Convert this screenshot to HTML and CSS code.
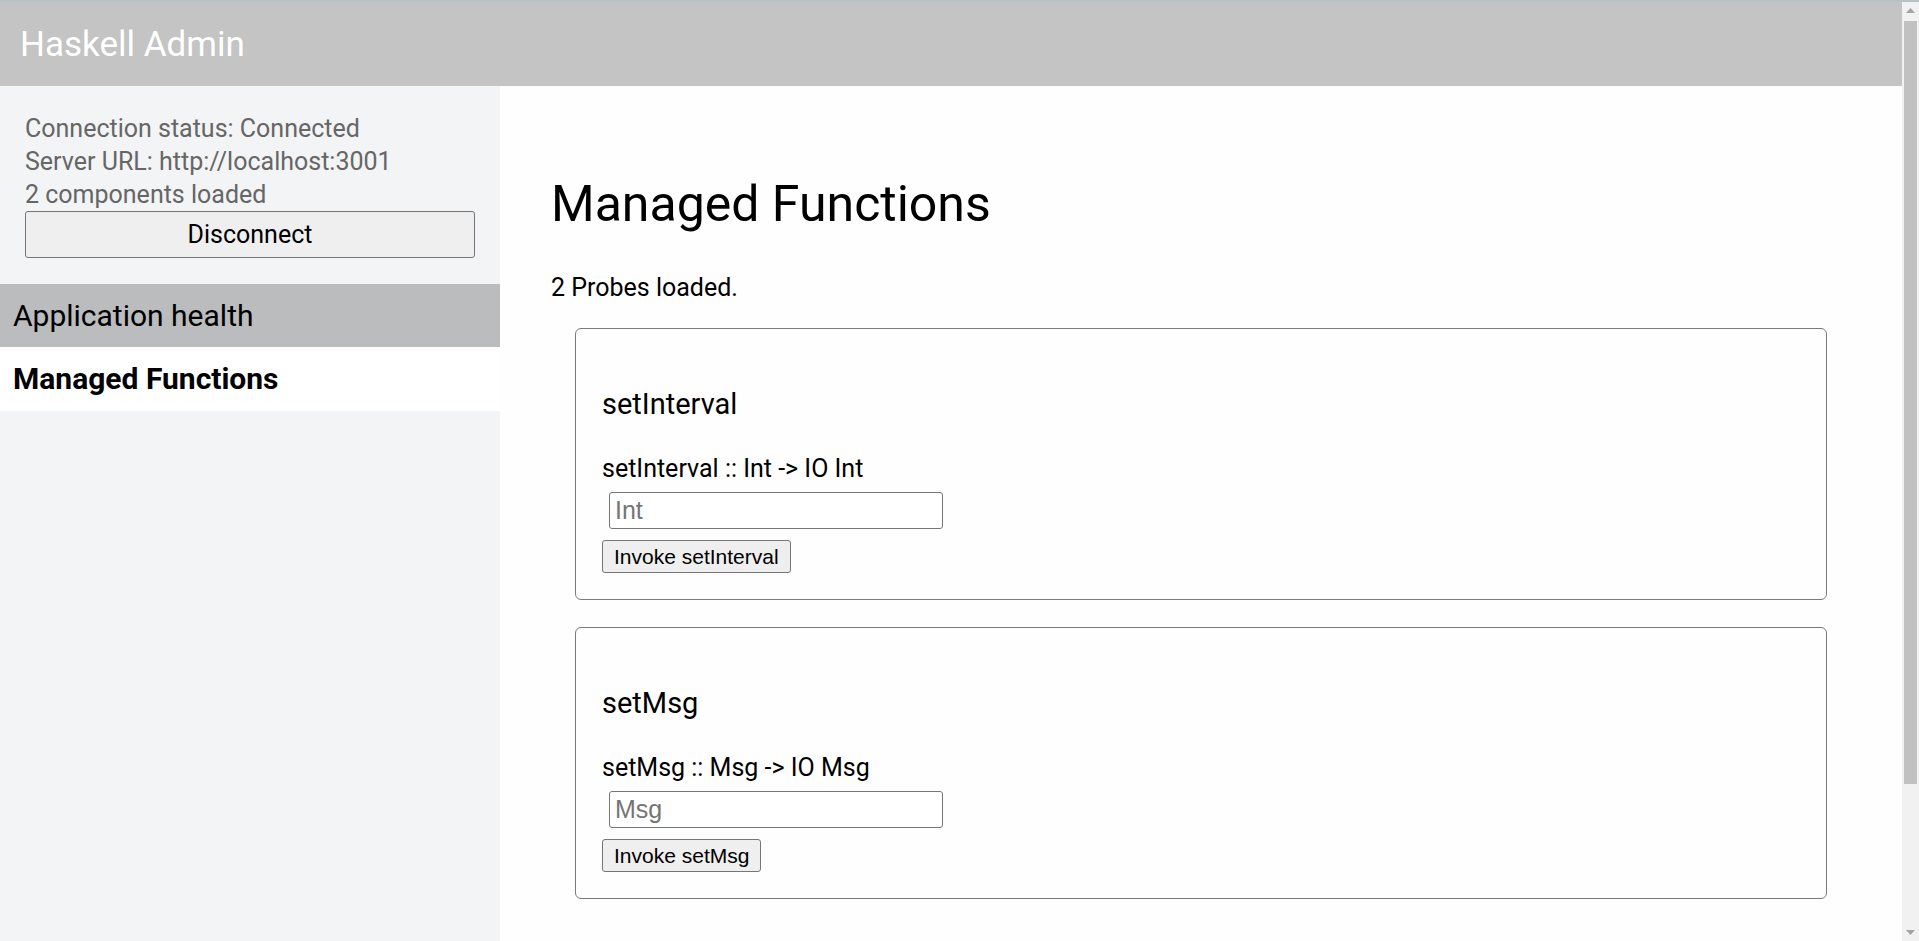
FILE: index.html
```html
<!DOCTYPE html>
<html lang="en">
<head>
<meta charset="utf-8">
<title>Haskell Admin</title>
<link rel="stylesheet" href="styles.css">
</head>
<body>
<div class="chrome-strip"></div>
<div class="viewport">
  <div class="page">
    <header class="topbar">Haskell Admin</header>
    <div class="layout">
      <aside class="sidebar">
        <div class="status">
          <div class="status-line">Connection status: Connected</div>
          <div class="status-line">Server URL: http://localhost:3001</div>
          <div class="status-line">2 components loaded</div>
          <button class="disconnect">Disconnect</button>
        </div>
        <nav class="nav">
          <div class="nav-item nav-hover">Application health</div>
          <div class="nav-item nav-active">Managed Functions</div>
        </nav>
      </aside>
      <main class="main">
        <h1 class="page-title">Managed Functions</h1>
        <p class="summary">2 Probes loaded.</p>
        <section class="card">
          <h3 class="card-title">setInterval</h3>
          <div class="signature">setInterval :: Int -&gt; IO Int</div>
          <div class="field"><input class="arg" type="text" placeholder="Int"></div>
          <button class="invoke">Invoke setInterval</button>
        </section>
        <section class="card">
          <h3 class="card-title">setMsg</h3>
          <div class="signature">setMsg :: Msg -&gt; IO Msg</div>
          <div class="field"><input class="arg" type="text" placeholder="Msg"></div>
          <button class="invoke">Invoke setMsg</button>
        </section>
      </main>
    </div>
  </div>
  <div class="scrollbar">
    <div class="sb-btn">
      <svg width="9" height="5" viewBox="0 0 9 5"><polygon points="0,5 9,5 4.5,0" fill="#a3a3a3"/></svg>
    </div>
    <div class="sb-track"><div class="sb-thumb"></div></div>
    <div class="sb-btn">
      <svg width="9" height="5" viewBox="0 0 9 5"><polygon points="0,0 9,0 4.5,5" fill="#a3a3a3"/></svg>
    </div>
  </div>
</div>
</body>
</html>
```
FILE: styles.css
```css
html, body {
  margin: 0;
  padding: 0;
}
body {
  font-family: Roboto, "Liberation Sans", Arial, sans-serif;
  font-size: 25px;
  color: #000;
  background: #fefefe;
}
.chrome-strip {
  height: 2px;
  background: #b9c1c5;
}
.viewport {
  display: flex;
  align-items: flex-start;
}
.page {
  flex: 1;
  min-width: 0;
}
.scrollbar {
  position: sticky;
  top: 2px;
  width: 17px;
  height: 939px;
  flex-shrink: 0;
  background: #f1f1f1;
  display: flex;
  flex-direction: column;
}
.sb-btn {
  height: 17px;
  display: flex;
  align-items: center;
  justify-content: center;
}
.sb-track {
  flex: 1;
  padding: 2px 2px 0 2px;
}
.sb-thumb {
  height: 763px;
  background: #c1c1c1;
}
.topbar {
  box-sizing: border-box;
  height: 84px;
  background: #c3c4c3;
  color: #ffffff;
  font-size: 35px;
  display: flex;
  align-items: center;
  padding: 0 0 0 20px;
}
.layout {
  display: flex;
  min-height: 1031px;
}
.sidebar {
  width: 500px;
  flex-shrink: 0;
  background: #f3f4f5;
}
.status {
  padding: 26px 25px 26px 25px;
  color: #666666;
}
.status-line {
  line-height: 33px;
}
.disconnect {
  display: block;
  box-sizing: border-box;
  width: 100%;
  height: 47px;
  margin: 0;
  font-family: Roboto, "Liberation Sans", Arial, sans-serif;
  font-size: 25px;
  color: #000;
  background: #efefef;
  border: 1px solid #767676;
  border-radius: 3px;
}
.nav-item {
  height: 64px;
  line-height: 64px;
  padding: 0 13px;
  font-size: 30px;
}
.nav-hover {
  background: #bbbcbd;
  height: 63px;
  line-height: 63px;
}
.nav-active {
  background: #ffffff;
  font-weight: 700;
}
.main {
  flex: 1;
  padding: 0 51px;
  background: #fefefe;
}
.page-title {
  font-size: 50px;
  font-weight: 400;
  line-height: 56px;
  margin: 90px 0 42px 0;
}
.summary {
  line-height: 28px;
  margin: 0 0 26px 0;
}
.card {
  border: 1px solid #7a7a7a;
  border-radius: 6px;
  padding: 0 26px 26px 26px;
  margin: 0 24px 27px 24px;
}
.card-title {
  font-size: 29px;
  font-weight: 400;
  line-height: 34px;
  margin: 58px 0 31px 0;
}
.signature {
  line-height: 33px;
}
.field {
  margin: 7px 0 0 7px;
}
.arg {
  box-sizing: border-box;
  width: 334px;
  height: 37px;
  padding: 0 5px;
  margin: 0;
  border: 1px solid #767676;
  border-radius: 3px;
  font-family: "Liberation Sans", Arial, sans-serif;
  font-size: 25px;
  background: #fff;
}
.arg::placeholder {
  color: #757575;
}
.invoke {
  display: block;
  box-sizing: border-box;
  height: 33px;
  margin: 11px 0 0 0;
  padding: 0 11px;
  font-family: "Liberation Sans", Arial, sans-serif;
  font-size: 21px;
  color: #000;
  background: #efefef;
  border: 1px solid #767676;
  border-radius: 3px;
}
```
